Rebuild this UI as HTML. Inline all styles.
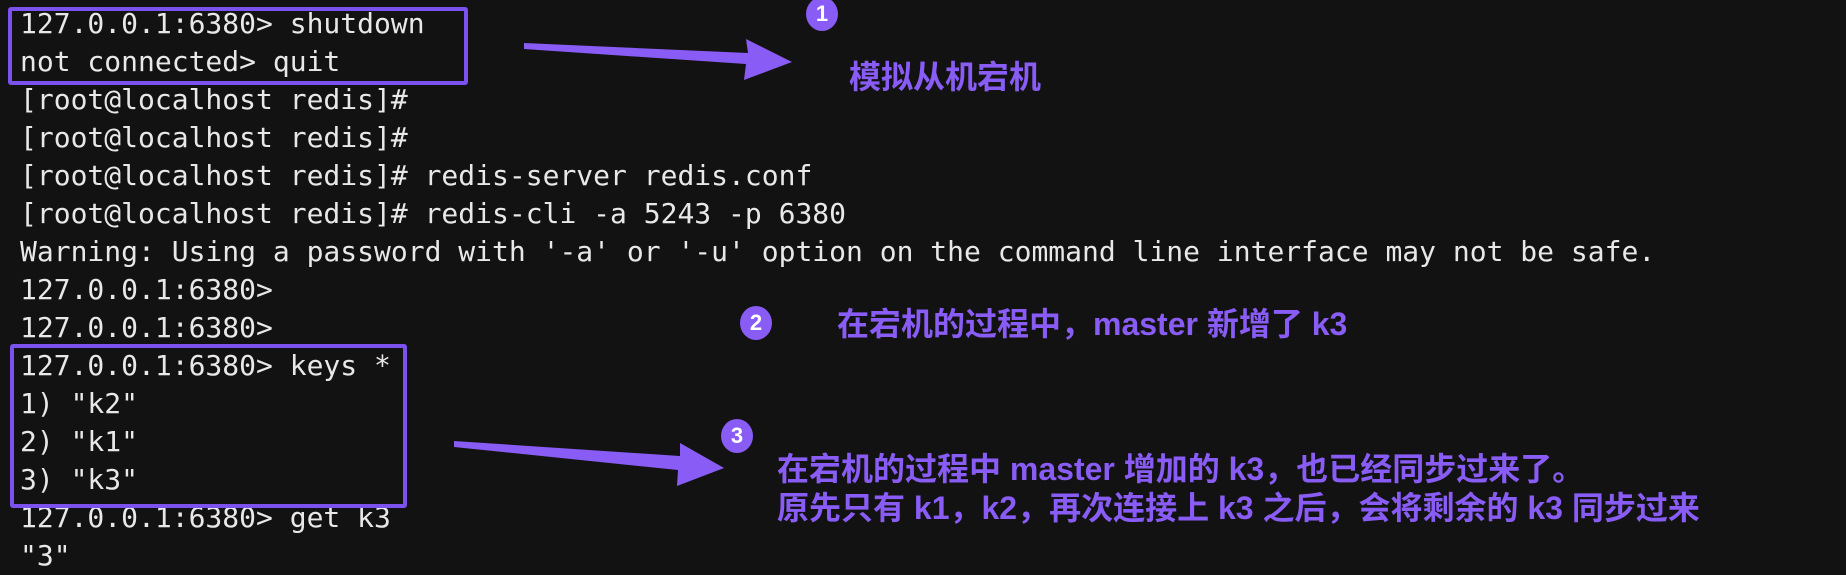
<!DOCTYPE html>
<html><head><meta charset="utf-8"><style>
body{margin:0;width:1846px;height:574px;background:#121212;overflow:hidden;position:relative}
.t{position:absolute;left:20px;top:5px;font-family:"DejaVu Sans Mono","Liberation Mono",monospace;font-size:28px;color:#e8e8e8;white-space:pre;line-height:38px}
.c{position:absolute;font-family:"Liberation Sans","Noto Sans CJK SC",sans-serif;font-weight:bold;color:#8a5cf6;font-size:32px;white-space:pre;line-height:39px;letter-spacing:0px}
.n{position:absolute;width:32px;height:34px;border-radius:50%;background:#8a5cf6;color:#fff;font:bold 22px "Liberation Sans",sans-serif;text-align:center;line-height:34px}
.b{position:absolute;border:4px solid #7b52f0;border-radius:3px}
</style></head><body>
<div class="t">127.0.0.1:6380&gt; shutdown
not connected&gt; quit
[root@localhost redis]#
[root@localhost redis]#
[root@localhost redis]# redis-server redis.conf
[root@localhost redis]# redis-cli -a 5243 -p 6380
Warning: Using a password with '-a' or '-u' option on the command line interface may not be safe.
127.0.0.1:6380&gt;
127.0.0.1:6380&gt;
127.0.0.1:6380&gt; keys *
1) "k2"
2) "k1"
3) "k3"
127.0.0.1:6380&gt; get k3
"3"</div>
<div class="b" style="left:8px;top:7px;width:452px;height:70px"></div>
<div class="b" style="left:10px;top:344px;width:389px;height:156px"></div>
<svg width="1846" height="574" style="position:absolute;left:0;top:0">
<polygon points="524,43 748,53 746,39 792,62 744,80 746,64 524,49" fill="#8a5cf6"/>
<polygon points="454,441 680,456 680,443 724,468 677,486 678,470 454,447" fill="#8a5cf6"/>
</svg>
<div class="n" style="left:806px;top:-3px">1</div>
<div class="n" style="left:740px;top:306px">2</div>
<div class="n" style="left:721px;top:419px">3</div>
<div class="c" style="left:849px;top:58px">模拟从机宕机</div>
<div class="c" style="left:837px;top:305px">在宕机的过程中，master 新增了 k3</div>
<div class="c" style="left:777px;top:450px">在宕机的过程中 master 增加的 k3，也已经同步过来了。
原先只有 k1，k2，再次连接上 k3 之后，会将剩余的 k3 同步过来</div>
</body></html>
